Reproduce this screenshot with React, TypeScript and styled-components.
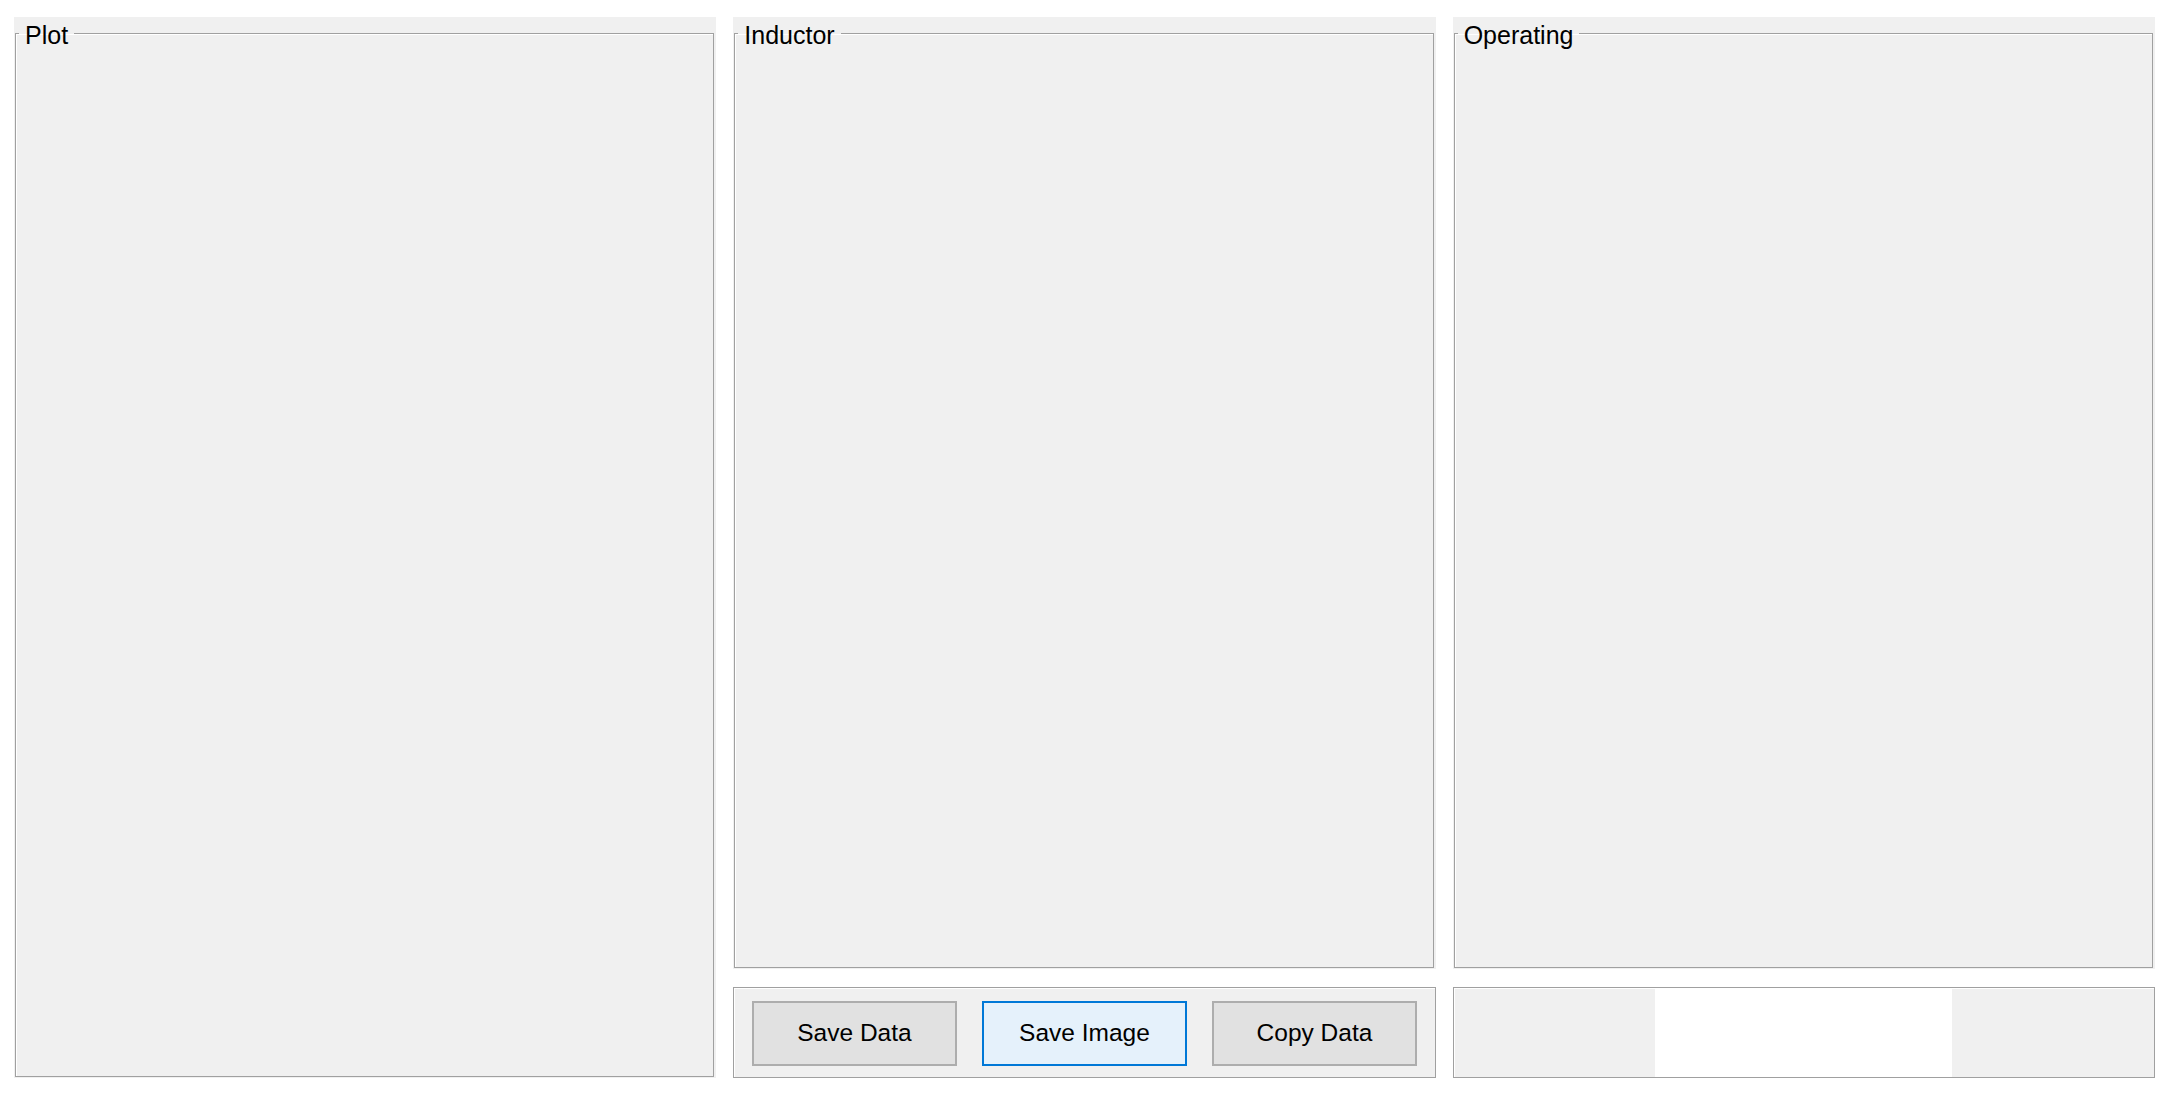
import React, { FC } from 'react';
import styled, { createGlobalStyle } from 'styled-components';

const GlobalStyle = createGlobalStyle`
  html, body {
    margin: 0;
    padding: 0;
    background: #ffffff;
    font-family: 'Liberation Sans', Arial, sans-serif;
  }
  #root {
    height: 100vh;
  }
`;

const Layout = styled.main`
  box-sizing: border-box;
  height: 100vh;
  padding: 17px 17px 16px 14px;
  display: grid;
  grid-template-columns: repeat(3, 1fr);
  column-gap: 17px;
`;

const Column = styled.section`
  display: flex;
  flex-direction: column;
  gap: 18px;
  min-height: 0;
`;

const Panel = styled.div`
  flex: 1;
  display: flex;
  background: #f0f0f0;
  padding: 2px 2px 1px 1px;
  min-height: 0;
`;

const Frame = styled.fieldset`
  flex: 1;
  margin: 0;
  padding: 0;
  min-width: 0;
  border: 1px solid #a0a0a0;
  box-shadow: inset 1px 1px 0 #ffffff;
`;

const Title = styled.legend`
  margin-left: 3px;
  padding: 4px 6px 0 6px;
  font-size: 25px;
  line-height: 24px;
  color: #000000;
`;

const ControlBar = styled.div<{ $centered?: boolean }>`
  box-sizing: border-box;
  height: 91px;
  display: flex;
  align-items: ${({ $centered }) => ($centered ? 'stretch' : 'center')};
  justify-content: center;
  gap: 25px;
  padding: ${({ $centered }) => ($centered ? '0' : '1px 0 0 0')};
  background: #f0f0f0;
  border: 1px solid #a0a0a0;
  box-shadow: inset 1px 1px 0 #ffffff;
`;

const ActionButton = styled.button<{ $focused?: boolean }>`
  box-sizing: border-box;
  width: 205px;
  height: 65px;
  padding: 0;
  font-family: 'Liberation Sans', Arial, sans-serif;
  font-size: 24.5px;
  color: #000000;
  background: ${({ $focused }) => ($focused ? '#e5f1fb' : '#e1e1e1')};
  border: 2px solid ${({ $focused }) => ($focused ? '#0078d7' : '#adadad')};
  border-radius: 0;
  cursor: pointer;
  outline: none;
`;

const Blank = styled.div`
  width: 297px;
  margin-top: 1px;
  background: #ffffff;
`;

const App: FC = () => (
  <>
    <GlobalStyle />
    <Layout>
      <Column>
        <Panel>
          <Frame>
            <Title>Plot</Title>
          </Frame>
        </Panel>
      </Column>
      <Column>
        <Panel>
          <Frame>
            <Title>Inductor</Title>
          </Frame>
        </Panel>
        <ControlBar>
          <ActionButton>Save Data</ActionButton>
          <ActionButton $focused>Save Image</ActionButton>
          <ActionButton>Copy Data</ActionButton>
        </ControlBar>
      </Column>
      <Column>
        <Panel>
          <Frame>
            <Title>Operating</Title>
          </Frame>
        </Panel>
        <ControlBar $centered>
          <Blank />
        </ControlBar>
      </Column>
    </Layout>
  </>
);

export default App;
